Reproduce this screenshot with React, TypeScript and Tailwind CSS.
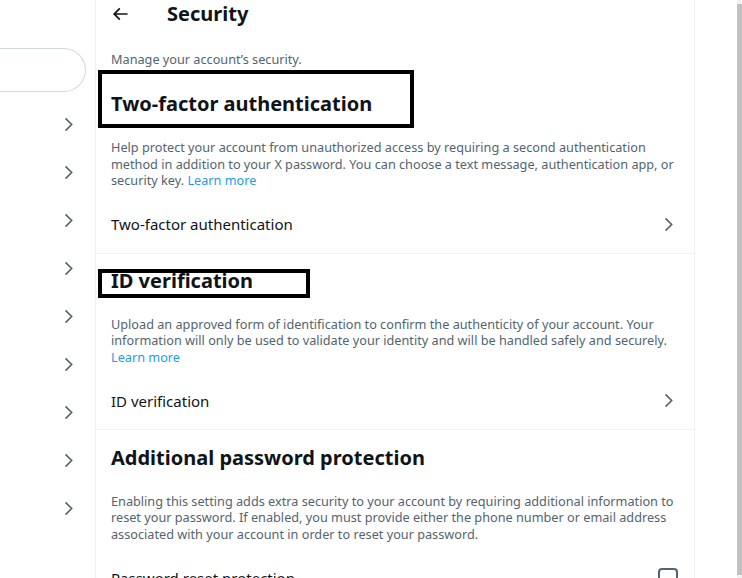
import React from "react";

const Chevron = ({ className }: { className?: string }) => (
  <svg viewBox="0 0 24 24" className={className} fill="currentColor" aria-hidden="true">
    <path d="M14.586 12L7.543 4.96l1.414-1.42L17.414 12l-8.457 8.46-1.414-1.42L14.586 12z" />
  </svg>
);

const BackArrow = ({ className }: { className?: string }) => (
  <svg viewBox="0 0 24 24" className={className} fill="currentColor" aria-hidden="true">
    <path d="M7.414 13l5.043 5.04-1.414 1.42L3.586 12l7.457-7.46 1.414 1.42L7.414 11H21v2H7.414z" />
  </svg>
);

const Row = ({ label, right }: { label: string; right?: React.ReactNode }) => (
  <div className="flex h-[57px] items-center justify-between pl-[15px] pr-4">
    <span className="text-[15px] leading-5 text-[#0f1419]">{label}</span>
    {right ?? <Chevron className="h-[19px] w-[19px] text-[#536471]" />}
  </div>
);

export default function App() {
  return (
    <div
      className="flex h-[578px] w-[742px] items-start overflow-hidden bg-white"
      style={{ fontFamily: '"Noto Sans", "Open Sans", sans-serif' }}
    >
      {/* left column */}
      <div className="w-[95px] shrink-0">
        <div className="mt-[48px] h-[44px] w-[86px] rounded-r-full border border-l-0 border-[#cfd9de]" />
        <div className="mt-[8px]">
          {Array.from({ length: 9 }).map((_, i) => (
            <div key={i} className="flex h-[48px] items-center justify-end pr-[17px]">
              <Chevron className="h-[19px] w-[19px] text-[#536471]" />
            </div>
          ))}
        </div>
      </div>

      {/* main column */}
      <div className="h-[578px] w-[600px] shrink-0 overflow-hidden border-x border-[#eff3f4]">
        <div className="flex h-[28px] items-center pl-[14px]">
          <BackArrow className="h-[20px] w-[20px] text-[#0f1419]" />
          <span className="ml-[37px] text-[20px] font-bold leading-6 text-[#0f1419]">Security</span>
        </div>

        <div className="mt-[23px] pl-[15px] pr-4 text-[12.7px] leading-4 text-[#536471]">
          Manage your account’s security.
        </div>

        {/* Two-factor authentication */}
        <div className="relative pl-[15px] pr-4 pt-[25px]">
          <h2 className="text-[20px] font-bold leading-6 text-[#0f1419]">Two-factor authentication</h2>
          <div className="absolute left-[2px] top-[3px] h-[58px] w-[316px] border-4 border-black" />
        </div>
        <div className="mt-[23px] pl-[15px] pr-4 pb-[7px] text-[12.7px] leading-[16.5px] text-[#536471]">
          <div className="whitespace-nowrap">
            Help protect your account from unauthorized access by requiring a second authentication
          </div>
          <div className="whitespace-nowrap">
            method in addition to your X password. You can choose a text message, authentication app, or
          </div>
          <div className="whitespace-nowrap">
            security key. <span className="text-[#1d9bf0]">Learn more</span>
          </div>
        </div>
        <div className="border-b border-[#eff3f4]">
          <Row label="Two-factor authentication" />
        </div>

        {/* ID verification */}
        <div className="relative pl-[15px] pr-4 pt-[15px]">
          <h2 className="text-[20px] font-bold leading-6 text-[#0f1419]">ID verification</h2>
          <div className="absolute left-[2px] top-[15px] h-[29px] w-[212px] border-4 border-black" />
        </div>
        <div className="mt-[23px] pl-[15px] pr-4 pb-[7px] text-[12.7px] leading-[16.5px] text-[#536471]">
          <div className="whitespace-nowrap">
            Upload an approved form of identification to confirm the authenticity of your account. Your
          </div>
          <div className="whitespace-nowrap">
            information will only be used to validate your identity and will be handled safely and securely.
          </div>
          <div className="whitespace-nowrap text-[#1d9bf0]">Learn more</div>
        </div>
        <div className="border-b border-[#eff3f4]">
          <Row label="ID verification" />
        </div>

        {/* Additional password protection */}
        <div className="pl-[15px] pr-4 pt-[15.5px]">
          <h2 className="text-[20px] font-bold leading-6 text-[#0f1419]">Additional password protection</h2>
        </div>
        <div className="mt-[23px] pl-[15px] pr-4 pb-[7px] text-[12.7px] leading-[16.5px] text-[#536471]">
          <div className="whitespace-nowrap">
            Enabling this setting adds extra security to your account by requiring additional information to
          </div>
          <div className="whitespace-nowrap">
            reset your password. If enabled, you must provide either the phone number or email address
          </div>
          <div className="whitespace-nowrap">
            associated with your account in order to reset your password.
          </div>
        </div>
        <Row
          label="Password reset protection"
          right={<div className="h-[20px] w-[20px] rounded-[4px] border-2 border-[#536471]" />}
        />
      </div>

      {/* spacer + scrollbar */}
      <div className="flex-1" />
      <div className="h-[578px] w-[5px] shrink-0 bg-[#f1f1f1] pt-[4px]">
        <div className="h-[571px] bg-[#c1c1c1]" />
      </div>
    </div>
  );
}
